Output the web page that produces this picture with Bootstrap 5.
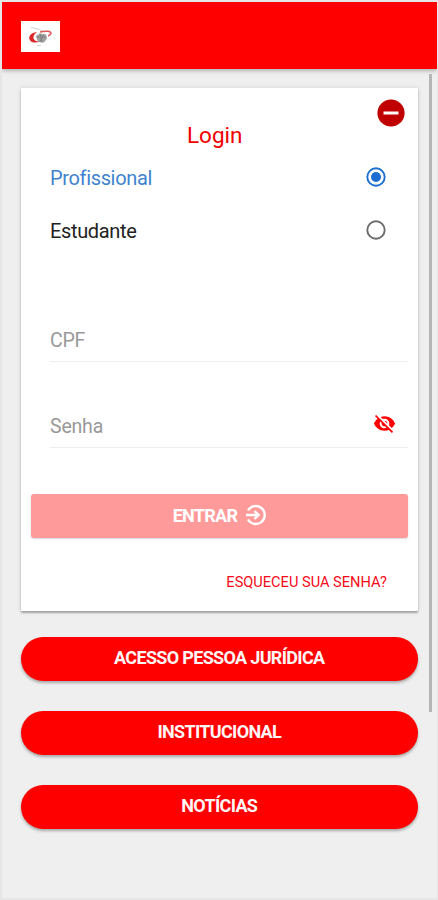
<!DOCTYPE html>
<html lang="pt-BR">
<head>
<meta charset="utf-8">
<meta name="viewport" content="width=device-width, initial-scale=1">
<title>Login</title>
<link href="https://cdn.jsdelivr.net/npm/bootstrap@5.3.0/dist/css/bootstrap.min.css" rel="stylesheet">
<style>
body{font-family:Roboto,"Liberation Sans",sans-serif;background:#efefef;color:#222}
.app{height:900px;border:2px solid #e6e6e6;border-right-width:1px}
.topbar{height:67px;background:#f00;padding:0 19px;box-shadow:0 2px 4px rgba(0,0,0,.25)}
.brand{width:39px;height:31px;background:#fff;margin-top:1px}
.content{padding:19px 19.5px 0 19px}
.panel{height:523px;background:#fff;border-radius:1px;box-shadow:0 2px 2px rgba(0,0,0,.28),0 0 5px rgba(0,0,0,.12)}
.close-btn{top:11px;right:12.5px;width:28px;height:28px}
.title{font-size:22.5px;line-height:28px;color:#f00000;padding:33px 9px 0 0;height:62px}
.option{height:53px;padding:0 31.5px 0 29px;font-size:20px;letter-spacing:-.35px}
.option span{padding-top:2px}
.option.active{color:#3f83cf}
.field{height:86px;margin:0 10px 0 29px;border-bottom:1.5px solid #eee;font-size:19.5px;letter-spacing:-.2px;color:#999;padding:0 12px 5px 0}
.field.first{height:105.5px}
.field svg{margin-bottom:7px}
.enter{margin:46px 9.5px 0 10px;height:44px;background:#ff9a9a;color:#fff;border-radius:3px;font-size:18px;letter-spacing:-.7px;box-shadow:0 1px 2px rgba(0,0,0,.16);padding:0 0 1px 1px}
.forgot{font-size:14.6px;line-height:20px;color:#f50a18;padding:34px 30.5px 0 0}
.links{gap:30px;margin-top:26px}
.pill{height:44px;background:#f00;color:#fff5f5;font-size:18px;font-weight:700;letter-spacing:-.67px;padding-bottom:3px;box-shadow:0 2px 3px rgba(0,0,0,.3)}
.scroll{top:72px;left:426.5px;width:3px;height:638px;background:#b5b5b5}
</style>
<script src="https://cdn.jsdelivr.net/npm/bootstrap@5.3.0/dist/js/bootstrap.bundle.min.js"></script>
</head>
<body>
<div class="app position-relative overflow-hidden">
  <header class="topbar d-flex align-items-center">
    <div class="brand d-flex align-items-center justify-content-center">
      <svg width="27" height="25" viewBox="0 0 27 25" fill="none">
        <path d="M4 3.500l7 1.500 5 2M10 21.500h4" stroke="#d4d4d4" stroke-width="1"/>
        <path d="M10 8C3 8.500 0 14 4 17.500c2 1.500 5 1.200 9 .3-4-.6-6.500-1.600-6.500-4.300C6.500 11 8 9.500 10 8z" fill="#dc2929"/>
        <path d="M13 8c6-1.500 11-1 11 1.200-.2 1.500-1.500 2.300-3 2.800" stroke="#df5858" stroke-width="1.500"/>
        <path d="M9 12l4-2.500 6 1 1 4-3 4-6-.500z" fill="#a0a0a0"/>
        <path d="M9 13h10M13 9.500l2 9M17 10l-4 8" stroke="#7c7c7c" stroke-width=".8"/>
      </svg>
    </div>
  </header>
  <main class="content">
    <section class="panel position-relative">
      <svg class="close-btn position-absolute" viewBox="0 0 28 28"><circle cx="14" cy="14" r="13.600" fill="#c00000"/><rect x="6.500" y="12.500" width="15" height="3" fill="#fff"/></svg>
      <h1 class="title text-center fw-normal mb-0">Login</h1>
      <div class="option active d-flex align-items-center justify-content-between">
        <span>Profissional</span>
        <svg width="20" height="20" viewBox="0 0 20 20"><circle cx="10" cy="10" r="8.700" fill="none" stroke="#1c6fd0" stroke-width="1.900"/><circle cx="10" cy="10" r="5" fill="#1c6fd0"/></svg>
      </div>
      <div class="option d-flex align-items-center justify-content-between">
        <span>Estudante</span>
        <svg width="20" height="20" viewBox="0 0 20 20"><circle cx="10" cy="10" r="8.700" fill="none" stroke="#6b6b6b" stroke-width="1.900"/></svg>
      </div>
      <div class="field first d-flex align-items-end"><span>CPF</span></div>
      <div class="field d-flex align-items-end justify-content-between">
        <span>Senha</span>
        <svg width="23" height="23" viewBox="0 0 24 24" fill="#f00"><path d="M12 7c2.760 0 5 2.240 5 5 0 .650-.130 1.260-.360 1.830l2.920 2.920c1.510-1.260 2.700-2.890 3.430-4.750-1.730-4.390-6-7.500-11-7.500-1.400 0-2.740.250-3.980.700l2.160 2.160C10.740 7.130 11.350 7 12 7zM2 4.270l2.280 2.280.460.460C3.080 8.300 1.780 10.020 1 12c1.730 4.390 6 7.500 11 7.500 1.550 0 3.030-.300 4.380-.840l.420.420L19.730 22 21 20.730 3.270 3 2 4.270zM7.530 9.800l1.550 1.550c-.050.210-.080.430-.080.650 0 1.660 1.340 3 3 3 .220 0 .440-.030.650-.080l1.550 1.550c-.670.330-1.410.530-2.200.530-2.760 0-5-2.240-5-5 0-.790.200-1.530.530-2.200zm4.310-.780l3.150 3.150.020-.160c0-1.660-1.340-3-3-3l-.170.010z"/></svg>
      </div>
      <div class="enter d-flex align-items-center justify-content-center fw-bold">
        <span>ENTRAR</span>
        <svg class="ms-2" width="22" height="22" viewBox="0 0 22 22" fill="none" stroke="#fff" stroke-width="2.400"><path d="M3 6.500a9 9 0 1 1 0 9M1 11h12.500M9.500 7l4 4-4 4"/></svg>
      </div>
      <div class="forgot text-end">ESQUECEU SUA SENHA?</div>
    </section>
    <div class="d-grid links">
      <a class="pill rounded-pill d-flex align-items-center justify-content-center text-decoration-none" href="#">ACESSO PESSOA JURÍDICA</a>
      <a class="pill rounded-pill d-flex align-items-center justify-content-center text-decoration-none" href="#">INSTITUCIONAL</a>
      <a class="pill rounded-pill d-flex align-items-center justify-content-center text-decoration-none" href="#">NOTÍCIAS</a>
    </div>
  </main>
  <div class="scroll position-absolute"></div>
</div>
</body>
</html>
